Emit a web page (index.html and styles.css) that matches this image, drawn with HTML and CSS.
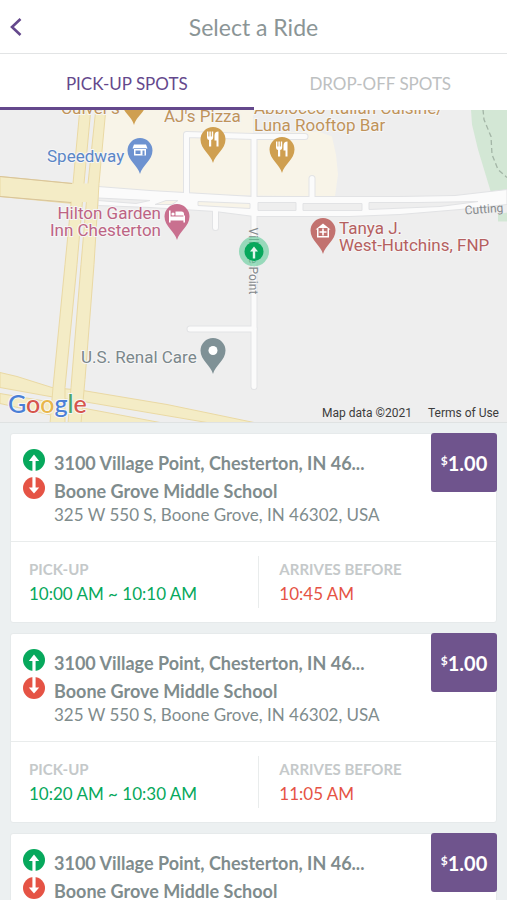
FILE: index.html
```
<!DOCTYPE html>
<html lang="en">
<head>
    <meta charset="UTF-8">
    <meta name="viewport" content="width=device-width, initial-scale=1.0">
    <title>Select a Ride</title>
    <link rel="stylesheet" href="styles.css">
</head>
<body>
    <!-- Shared icons -->
    <svg class="sprite" aria-hidden="true">
        <symbol id="icon-up" viewBox="0 0 22 22">
            <circle cx="11" cy="11" r="11" fill="#07a85c"/>
            <path d="M11 5.5 L16.2 12 H12.6 V22 H9.4 V12 H5.8 Z" fill="#fff"/>
        </symbol>
        <symbol id="icon-down" viewBox="0 0 22 22">
            <circle cx="11" cy="11" r="11" fill="#e55345"/>
            <path d="M11 16.5 L16.2 10.5 H12.6 V0 H9.4 V10.5 H5.8 Z" fill="#fff"/>
        </symbol>
        <symbol id="pin" viewBox="-13 -13 26 37" overflow="visible">
            <path d="M0 23.5 C-2 15 -12.5 10 -12.5 0 A12.5 12.5 0 0 1 12.5 0 C12.5 10 2 15 0 23.5 Z"/>
        </symbol>
    </svg>

    <div class="app">
        <header class="header">
            <button class="back" aria-label="Back">
                <svg width="12" height="18" viewBox="0 0 12 18"><path d="M10.5 1 L2 9 L10.5 17" fill="none" stroke="#64488c" stroke-width="2.6"/></svg>
            </button>
            <h1>Select a Ride</h1>
        </header>

        <nav class="tabs">
            <button class="tab active">PICK-UP SPOTS</button>
            <button class="tab">DROP-OFF SPOTS</button>
        </nav>

        <!-- Map -->
        <section class="map">
            <svg class="map-canvas" viewBox="0 0 507 313" preserveAspectRatio="xMidYMid slice">
                <rect width="507" height="313" fill="#eeeeee"/>
                <path d="M105 0 H253 V24 L318 22 L332 27 L336 45 L338 65 L335 87 L98 84 Z" fill="#f8f4e8"/>
                <path d="M471 0 H507 V82 L491 83 L478 40 L472 15 Z M498 105 L507 103 V112 H498 Z" fill="#d3e7d5"/>
                <path d="M483 0 L484 10 L491 27 L492 45 L498 60 L507 68" fill="none" stroke="#a3b5a6" stroke-width="1.3" stroke-dasharray="5 3"/>

                <!-- Side streets -->
                <g fill="none" stroke="#e2e3e5" stroke-width="7" stroke-linejoin="round" stroke-linecap="round">
                    <path d="M186.500 88 V25 L254 27 L305 27"/>
                    <path d="M254 27 V277"/>
                    <path d="M312 69 V88"/>
                    <path d="M215.500 100 V118"/>
                    <path d="M190 219.500 H254"/>
                </g>
                <path d="M98 77 L150 81 L254 87 H400 L455 86 L507 80 V95 L460 100 L400 105 L350 107 H254 L215 102 L150 98 L98 96 Z" fill="#fbfbfb" stroke="#e2e3e5"/>
                <g fill="none" stroke="#fbfbfb" stroke-width="5" stroke-linejoin="round" stroke-linecap="round">
                    <path d="M186.500 88 V25 L254 27 L305 27"/>
                    <path d="M254 27 V277"/>
                    <path d="M312 69 V90"/>
                    <path d="M215.500 100 V118"/>
                    <path d="M190 219.500 H254"/>
                </g>
                <g fill="#eeeeee" stroke="#e2e3e5">
                    <path d="M98 88.500 L150 91 L136 94 L98 91 Z"/>
                    <path d="M258 93 H296 V101 H258 Z M303 94 H362 V101 H303 Z M369 93 H420 L478 92 L440 97 L369 100 Z"/>
                    <path d="M198 92 L250 94 V99 L198 96 Z M155 95 L166 91 H178 L172 95 Z" fill="#f8f4e8"/>
                </g>

                <!-- Highways -->
                <g fill="#f4ecc6" stroke="#ead9a4">
                    <path d="M0 263 L17 267 L52 278 L83 281 L167 295 L254 313 H207 L83 292 L50 287 L0 278 Z"/>
                    <path d="M0 284 L53 293 V306 L0 294 Z M80 298 L160 313 H72 Z"/>
                    <path d="M0 67 L73 74 V94 L0 87 Z"/>
                    <path d="M80 -2 H91 L84 74 L77 155 L65 278 V314 H50 L53 278 L65 155 L73 74 Z"/>
                    <path d="M96 -2 H106 L99 74 L94 155 L85 270 L81 314 H68 L71 278 L81 155 L88 74 Z"/>
                </g>
                <path d="M70 74 H98 L97 93 L68 92 Z" fill="#f4ecc6"/>
                <path d="M0 67 L72 74 M0 87 L71 93" fill="none" stroke="#d9c49a"/>

                <!-- Street names -->
                <g class="street">
                    <text x="465" y="105" transform="rotate(-4 465 105)">Cutting</text>
                    <text x="118" y="-249" transform="rotate(90)">Village Point</text>
                </g>

                <!-- Places -->
                <g class="place food">
                    <text x="61" y="4">Culver's</text>
                    <text x="164" y="12">AJ's Pizza</text>
                    <text x="254" y="4">Abbiocco Italian Cuisine/</text>
                    <text x="254" y="21">Luna Rooftop Bar</text>
                    <use href="#pin" x="121" y="-21" width="26" height="37"/>
                    <use href="#pin" x="200" y="17" width="26" height="37"/>
                    <use href="#pin" x="269" y="27" width="26" height="37"/>
                </g>
                <g class="place shop">
                    <text x="47" y="52">Speedway</text>
                    <use href="#pin" x="127" y="28" width="26" height="37"/>
                </g>
                <g class="place hotel">
                    <text x="161" y="109" text-anchor="end">Hilton Garden</text>
                    <text x="161" y="126" text-anchor="end">Inn Chesterton</text>
                    <use href="#pin" x="164" y="94" width="26" height="37"/>
                </g>
                <g class="place doctor">
                    <text x="339" y="124">Tanya J.</text>
                    <text x="339" y="141">West-Hutchins, FNP</text>
                    <use href="#pin" x="310" y="108" width="26" height="37"/>
                </g>
                <g class="place clinic">
                    <text x="81" y="253">U.S. Renal Care</text>
                    <use href="#pin" x="200" y="228" width="26" height="37"/>
                </g>

                <!-- Pin glyphs -->
                <g fill="#fff">
                    <path id="fork" d="M207 22 h1.400 v5 h1 v-5 h1.400 v5 h1 v-5 h1.400 v6 q0 2 -2 2.500 V37 h-2.200 V30.500 q-2 -.5 -2 -2.500 Z M218.500 22 V37 h-2 V31 h-2 V26 q0 -4 4 -4 Z"/>
                    <use href="#fork" x="69" y="10"/>
                    <path d="M134 35 h12 l1.500 4 h-1.500 v7 h-12 v-7 h-1.500 Z"/>
                    <path d="M169 101 h1.600 v6 h12.800 v-1 h1.600 v7 h-1.600 v-2 h-12.800 v2 H169 Z M175.500 102 h6 q2.500 0 2.500 2.500 v1.500 h-8.500 Z"/>
                    <circle cx="173" cy="104.500" r="1.600"/>
                    <path d="M315.500 120 L323 114 L330.500 120 H329 V128 H317 V120 Z"/>
                    <circle cx="213" cy="241" r="4.500"/>
                </g>
                <path d="M135.500 41 h5 v3.500 h-5 Z M142.500 41 h2 v5 h-2 Z M134 38.500 h12 v.7 h-12 Z" fill="#6d92d0"/>
                <path d="M318.500 118.500 h9 v8 h-9 Z" fill="#c2726f"/>
                <path d="M322.200 119 h1.600 v2.700 h2.700 v1.600 h-2.700 v2.700 h-1.600 v-2.700 h-2.700 v-1.600 h2.700 Z" fill="#fff"/>

                <!-- Pick-up spot -->
                <circle cx="254" cy="142" r="15" fill="#5ecb98" opacity=".6"/>
                <circle cx="254" cy="142" r="9.500" fill="#07a85c"/>
                <path d="M254 137 L258 142 H255.200 V149 H252.800 V142 H250 Z" fill="#e4f6ed"/>

                <text class="google" x="8" y="303"><tspan fill="#4a7fd6">G</tspan><tspan fill="#d6554b">o</tspan><tspan fill="#e9b64b">o</tspan><tspan fill="#4a7fd6">g</tspan><tspan fill="#4fa566">l</tspan><tspan fill="#d6554b">e</tspan></text>
            </svg>
            <div class="attribution">
                <span>Map data ©2021</span>
                <a href="#">Terms of Use</a>
            </div>
        </section>

        <!-- Rides -->
        <main class="rides">
            <article class="ride">
                <div class="route">
                    <svg class="stop-icon"><use href="#icon-up"/></svg>
                    <h2>3100 Village Point, Chesterton, IN 46...</h2>
                    <svg class="stop-icon"><use href="#icon-down"/></svg>
                    <h2>Boone Grove Middle School</h2>
                    <p class="address">325 W 550 S, Boone Grove, IN 46302, USA</p>
                </div>
                <div class="price"><sup>$</sup>1.00</div>
                <div class="times">
                    <div class="time pickup">
                        <h3>PICK-UP</h3>
                        <p>10:00 AM ~ 10:10 AM</p>
                    </div>
                    <div class="time arrival">
                        <h3>ARRIVES BEFORE</h3>
                        <p>10:45 AM</p>
                    </div>
                </div>
            </article>

            <article class="ride">
                <div class="route">
                    <svg class="stop-icon"><use href="#icon-up"/></svg>
                    <h2>3100 Village Point, Chesterton, IN 46...</h2>
                    <svg class="stop-icon"><use href="#icon-down"/></svg>
                    <h2>Boone Grove Middle School</h2>
                    <p class="address">325 W 550 S, Boone Grove, IN 46302, USA</p>
                </div>
                <div class="price"><sup>$</sup>1.00</div>
                <div class="times">
                    <div class="time pickup">
                        <h3>PICK-UP</h3>
                        <p>10:20 AM ~ 10:30 AM</p>
                    </div>
                    <div class="time arrival">
                        <h3>ARRIVES BEFORE</h3>
                        <p>11:05 AM</p>
                    </div>
                </div>
            </article>

            <article class="ride">
                <div class="route">
                    <svg class="stop-icon"><use href="#icon-up"/></svg>
                    <h2>3100 Village Point, Chesterton, IN 46...</h2>
                    <svg class="stop-icon"><use href="#icon-down"/></svg>
                    <h2>Boone Grove Middle School</h2>
                </div>
                <div class="price"><sup>$</sup>1.00</div>
            </article>
        </main>
    </div>
</body>
</html>
```

FILE: styles.css
```
* {
    margin: 0;
    padding: 0;
    box-sizing: border-box;
}

body {
    font-family: Lato, sans-serif;
    background: #ecf0f1;
    color: #7f8c8d;
}

button {
    font-family: inherit;
    background: none;
    border: none;
    cursor: pointer;
}

.sprite {
    position: absolute;
    width: 0;
    height: 0;
}

.app {
    display: flex;
    flex-direction: column;
    height: 100vh;
    overflow: hidden;
}

/* Header */
.header {
    display: grid;
    grid-template-columns: 40px 1fr 40px;
    align-items: center;
    height: 54px;
    flex-shrink: 0;
    background: #fff;
    border-bottom: 1px solid #e2e4e5;
}

.back {
    display: flex;
    align-items: center;
    height: 54px;
    padding-left: 10px;
}

.header h1 {
    font-size: 23px;
    font-weight: normal;
    line-height: 32px;
    text-align: center;
    color: #8b9596;
}

/* Tabs */
.tabs {
    display: flex;
    height: 56px;
    flex-shrink: 0;
    background: #fff;
}

.tab {
    flex: 1;
    padding-top: 6px;
    font-size: 17px;
    color: #bdc0c1;
    border-bottom: 3px solid #fff;
}

.tab.active {
    color: #64488c;
    border-bottom-color: #64488c;
}

/* Map */
.map {
    position: relative;
    height: 313px;
    flex-shrink: 0;
    border-bottom: 1px solid #dfe2e2;
    font-family: Roboto, sans-serif;
}

.map-canvas {
    display: block;
    width: 100%;
    height: 100%;
}

.place text {
    font-size: 17px;
    stroke: #f6f6f6;
    stroke-width: 2px;
    paint-order: stroke;
}

.food { fill: #cf9f50; }
.food text { fill: #c0935a; }
.shop { fill: #6d92d0; }
.shop text { fill: #5b86c6; }
.hotel { fill: #c9708f; }
.hotel text { fill: #bd6484; }
.doctor { fill: #c2726f; }
.doctor text { fill: #b5605f; }
.clinic { fill: #7f9196; }
.clinic text { fill: #7b878b; }

.street {
    font-size: 12px;
    fill: #85898c;
}

.google {
    font-family: Lato, sans-serif;
    font-size: 25px;
    stroke: #f6f6f6;
    stroke-width: 2px;
    paint-order: stroke;
}

.google tspan {
    font-weight: 500;
}

.attribution {
    position: absolute;
    right: 8px;
    bottom: 1px;
    display: flex;
    gap: 16px;
    font-size: 12px;
    line-height: 16px;
    color: #3c3c3c;
}

.attribution a {
    color: inherit;
    text-decoration: none;
}

/* Ride cards */
.rides {
    display: flex;
    flex: 1;
    flex-direction: column;
    gap: 10px;
    min-height: 0;
    padding: 10px;
    overflow: hidden;
}

.ride {
    position: relative;
    flex-shrink: 0;
    background: #fff;
    border: 1px solid #e6eaeb;
    border-radius: 3px;
}

.route {
    display: grid;
    grid-template-columns: 22px 1fr;
    column-gap: 9px;
    padding: 15px 76px 17px 12px;
}

.stop-icon {
    width: 22px;
    height: 22px;
}

.route h2 {
    font-size: 18px;
    line-height: 28px;
    white-space: nowrap;
}

.address {
    grid-column: 2;
    font-size: 17px;
    line-height: 19px;
    white-space: nowrap;
}

.price {
    position: absolute;
    top: -1px;
    right: -1px;
    width: 66px;
    height: 59px;
    font-size: 20px;
    font-weight: bold;
    line-height: 60px;
    text-align: center;
    color: #fff;
    background: #6f548d;
    border-radius: 3px;
}

.price sup {
    font-size: 12px;
    line-height: 0;
    vertical-align: 6px;
}

.times {
    display: grid;
    grid-template-columns: 51% 49%;
    padding: 14px 0;
    border-top: 1px solid #e9ecec;
}

.time {
    padding: 1px 18px;
}

.time h3 {
    font-size: 15px;
    line-height: 24px;
    color: #c5c9ca;
}

.time p {
    font-size: 17px;
    line-height: 26px;
}

.pickup p {
    color: #07a85c;
}

.arrival {
    padding-left: 20px;
    border-left: 1px solid #e9ecec;
}

.arrival p {
    color: #e55345;
}
```
